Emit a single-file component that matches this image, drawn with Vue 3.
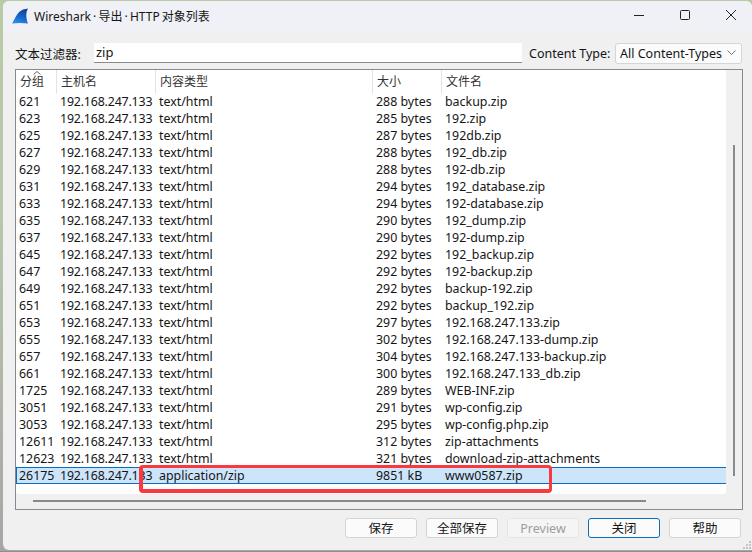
<script setup>
const rows = [
  ['621','288 bytes','backup.zip'],['623','285 bytes','192.zip'],['625','287 bytes','192db.zip'],
  ['627','288 bytes','192_db.zip'],['629','288 bytes','192-db.zip'],['631','294 bytes','192_database.zip'],
  ['633','294 bytes','192-database.zip'],['635','290 bytes','192_dump.zip'],['637','290 bytes','192-dump.zip'],
  ['645','292 bytes','192_backup.zip'],['647','292 bytes','192-backup.zip'],['649','292 bytes','backup-192.zip'],
  ['651','292 bytes','backup_192.zip'],['653','297 bytes','192.168.247.133.zip'],['655','302 bytes','192.168.247.133-dump.zip'],
  ['657','304 bytes','192.168.247.133-backup.zip'],['661','300 bytes','192.168.247.133_db.zip'],['1725','289 bytes','WEB-INF.zip'],
  ['3051','291 bytes','wp-config.zip'],['3053','295 bytes','wp-config.php.zip'],['12611','312 bytes','zip-attachments'],
  ['12623','321 bytes','download-zip-attachments']
]
const headers = ['分组','主机名','内容类型','大小','文件名']
const buttons = ['保存','全部保存','Preview','关闭','帮助']
const grip = [[6,0],[3,3],[6,3],[0,6],[3,6],[6,6]]
</script>

<template>
  <div class="desktop">
    <div class="window">
      <header class="titlebar">
        <svg class="logo" width="16" height="16" viewBox="0 0 16 16">
          <defs>
            <linearGradient id="fin" x1="0.7" y1="0" x2="0.3" y2="1">
              <stop offset="0" stop-color="#123f8f"/>
              <stop offset="0.55" stop-color="#1766c8"/>
              <stop offset="1" stop-color="#2b90ea"/>
            </linearGradient>
          </defs>
          <path d="M0 15.500 C3 11 5 4 11 1.500 C12.500 1 14.500 0.700 16 0.500 C13.800 4 13.800 10 16 15.500 C11 14.800 5 14.800 0 15.500 Z" fill="url(#fin)"/>
        </svg>
        <span class="title">Wireshark · 导出 · HTTP 对象列表</span>
        <div class="controls">
          <svg width="12" height="12" viewBox="0 0 12 12"><path d="M1 6.500H11" stroke="#222" fill="none"/></svg>
          <svg width="12" height="12" viewBox="0 0 12 12"><rect x="1.500" y="1.500" width="9" height="9" rx="1" stroke="#222" fill="none"/></svg>
          <svg width="12" height="12" viewBox="0 0 12 12"><path d="M1 1L11 11M11 1L1 11" stroke="#222" fill="none"/></svg>
        </div>
      </header>

      <main class="content">
        <div class="filter">
          <label class="filter-label">文本过滤器:</label>
          <div class="input">zip</div>
          <label class="type-label">Content Type:</label>
          <div class="select">
            <span>All Content-Types</span>
            <svg width="9" height="6" viewBox="0 0 9 6"><path d="M0.500 0.500L4.500 4.500L8.500 0.500" stroke="#777" fill="none"/></svg>
          </div>
        </div>

        <div class="frame">
          <div class="view">
            <div class="list">
              <div class="head">
                <div v-for="h in headers" :key="h" class="hcell">{{ h }}</div>
                <svg class="sort" width="8" height="4" viewBox="0 0 8 4"><path d="M0.500 3.500L4 0.500L7.500 3.500" stroke="#666" fill="none"/></svg>
              </div>
              <div v-for="r in rows" :key="r[0]" class="row">
                <span>{{ r[0] }}</span><span class="host">192.168.247.133</span><span>text/html</span><span>{{ r[1] }}</span><span>{{ r[2] }}</span>
              </div>
              <div class="row selected">
                <span>26175</span><span class="host">192.168.247.133</span><span>application/zip</span><span>9851 kB</span><span>www0587.zip</span>
              </div>
            </div>
            <div class="vtrack"><div class="vthumb"></div></div>
          </div>
          <div class="htrack"><div class="hthumb"></div></div>
        </div>

        <div class="buttons">
          <button v-for="b in buttons" :key="b" :class="{ disabled: b === 'Preview', primary: b === '关闭' }">{{ b }}</button>
        </div>
      </main>
      <div class="annotation"></div>
      <svg class="grip" width="8" height="8" viewBox="0 0 8 8">
        <rect v-for="g in grip" :key="g.join()" :x="g[0]" :y="g[1]" width="2" height="2" fill="#c4c4c4"/>
      </svg>
    </div>
  </div>
</template>

<style>
html, body { margin: 0; background: #3a3a3a; overflow: hidden; }
</style>

<style scoped>
.desktop {
  width: 752px;
  height: 552px;
  overflow: hidden;
  box-sizing: border-box;
  padding: 1px 0 1px 3px;
  background: linear-gradient(180deg, #b8cba5 0, #b8c6ab 40%, #a6a6a6 100%);
  border-bottom: 1px solid #8f8f8f;
  font: 13px "Noto Sans", "Noto Sans CJK SC", sans-serif;
  color: #151515;
}
.window {
  position: relative;
  height: 100%;
  width: 749px;
  border-radius: 6px 6px 0 6px;
  background: #f0f0f0;
  display: flex;
  flex-direction: column;
  overflow: hidden;
}
.titlebar {
  height: 30px;
  flex: none;
  display: flex;
  align-items: center;
  padding-left: 9px;
  background: #eff1f7;
}
.logo { flex: none; margin-right: 6px; }
.title { font-size: 12px; white-space: nowrap; word-spacing: -1px; }
.controls { margin-left: auto; display: flex; gap: 34px; padding-right: 15px; margin-bottom: 2px; }
.content { flex: 1; padding: 12px 0 0 12px; display: flex; flex-direction: column; }
.filter { display: flex; align-items: center; height: 20px; }
.filter-label { flex: none; width: 79px; font-size: 12.500px; }
.input {
  flex: none;
  width: 426px;
  height: 19px;
  line-height: 18px;
  padding-left: 2px;
  background: #fff;
  border-bottom: 1px solid #8a8a8a;
  font-size: 13px;
}
.type-label { flex: none; margin-left: 7px; width: 86px; white-space: nowrap; font-size: 12.500px; }
.select {
  flex: none;
  width: 116px;
  height: 19px;
  display: flex;
  align-items: center;
  justify-content: space-between;
  padding: 0 5px 0 4px;
  background: #fbfbfb;
  border: 1px solid #d5d5d5;
  border-radius: 3px;
  white-space: nowrap;
  font-size: 12.500px;
}
.frame {
  margin-top: 6px;
  width: 728px;
  height: 441px;
  border: 1px solid #868a8e;
  box-sizing: border-box;
  display: flex;
  flex-direction: column;
}
.view { flex: 1; display: flex; min-height: 0; }
.list { flex: none; width: 710px; background: #fff; border-radius: 0 0 3px 3px; }
.head {
  position: relative;
  height: 23px;
  display: grid;
  grid-template-columns: 41px 99px 217px 69px 1fr;
  color: #333;
}
.hcell {
  line-height: 24px;
  padding-left: 4px;
  border-right: 1px solid #e3e3e3;
  box-sizing: border-box;
  font-size: 12px;
}
.hcell:last-of-type { border-right: 0; }
.sort { position: absolute; left: 17px; top: 1px; }
.row {
  height: 17px;
  line-height: 17px;
  display: grid;
  grid-template-columns: 41px 99px 217px 69px 1fr;
  font-size: 12.400px;
  white-space: nowrap;
}
.row span { padding-left: 3px; }
.row .host { letter-spacing: -0.18px; }
.selected {
  background: #cce5fb;
  border-top: 1px solid #0f6cbd;
  border-bottom: 1px solid #0f6cbd;
  line-height: 15px;
  box-sizing: border-box;
}
.selected span:first-child { border-left: 1px solid #0f6cbd; padding-left: 2px; }
.vtrack { flex: 1; background: #f0f0f0; display: flex; justify-content: center; padding-top: 75px; padding-bottom: 18px; }
.vthumb { width: 2px; height: 331px; background: #8a8a8a; }
.htrack { height: 15px; flex: none; padding: 6px 0 0 17px; background: #f0f0f0; box-sizing: border-box; }
.hthumb { width: 613px; height: 2px; background: #8a8a8a; }
.buttons { display: flex; gap: 9px; justify-content: flex-end; padding: 8px 11px 0 0; }
button {
  width: 72px;
  height: 20px;
  padding: 0;
  font: inherit;
  font-size: 12.500px;
  line-height: 17px;
  color: #151515;
  background: #fbfbfb;
  border: 1px solid #d3d3d3;
  border-radius: 3px;
}
button.disabled { color: #9d9d9d; background: #f5f5f5; border-color: #e6e6e6; }
button.primary { border-color: #0f6cbd; }
.annotation {
  position: absolute;
  left: 136px;
  top: 464px;
  width: 413px;
  height: 28px;
  box-sizing: border-box;
  border-style: solid;
  border-color: #f9393d;
  border-width: 3px 3px 4px 4px;
  border-radius: 4px;
  pointer-events: none;
}
.grip { position: absolute; right: 1px; bottom: 1px; }
</style>
